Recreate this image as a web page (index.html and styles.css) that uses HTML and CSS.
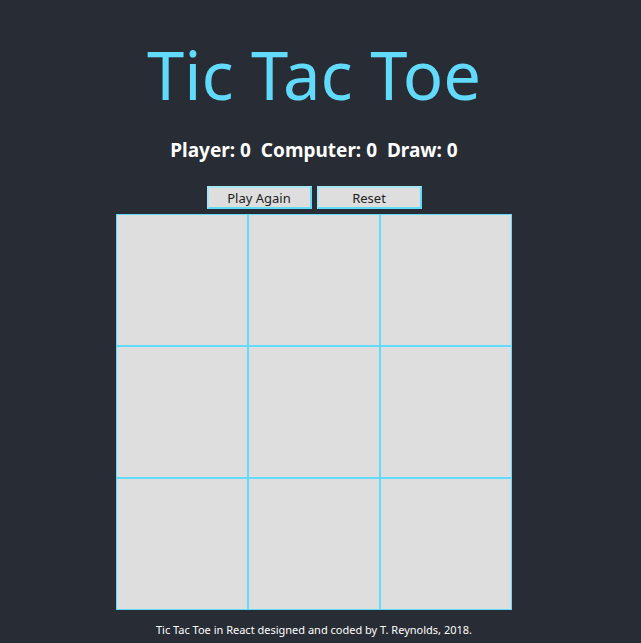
FILE: index.html
```html
<!DOCTYPE html>
<html lang="en">
<head>
  <meta charset="UTF-8" />
  <meta name="viewport" content="width=device-width, initial-scale=1.0"/>
  <title>Tic Tac Toe</title>
  <link rel="stylesheet" href="styles.css">
</head>
<body>
  <div class="app">
    <h1 class="title">Tic Tac Toe</h1>

    <div class="score">Player: 0&nbsp; Computer: 0&nbsp; Draw: 0</div>

    <div class="controls">
      <button class="btn">Play Again</button>
      <button class="btn">Reset</button>
    </div>

    <div class="board">
      <div class="cell"></div>
      <div class="cell"></div>
      <div class="cell"></div>
      <div class="cell"></div>
      <div class="cell"></div>
      <div class="cell"></div>
      <div class="cell"></div>
      <div class="cell"></div>
      <div class="cell"></div>
    </div>

    <footer class="credit">Tic Tac Toe in React designed and coded by T. Reynolds, 2018.</footer>
  </div>
</body>
</html>
```

FILE: styles.css
```css
body {
  background-color: #282c34;
  font-family: 'Noto Sans', 'Open Sans', sans-serif;
  margin: 0;
  padding: 0;
  color: #fff;
}

.app {
  width: 628px;
  text-align: center;
}

.title {
  margin: 0;
  padding-top: 34px;
  font-size: 67px;
  font-weight: normal;
  line-height: 80px;
  color: #61dafb;
}

.score {
  margin-top: 23px;
  font-size: 19px;
  font-weight: bold;
  line-height: 26px;
}

.controls {
  display: flex;
  justify-content: center;
  gap: 5px;
  margin-top: 23px;
}

.btn {
  width: 105px;
  height: 23px;
  padding: 0;
  background-color: #dedede;
  border: 2px solid #61dafb;
  border-top-color: #a8e6f5;
  border-left-color: #a8e6f5;
  font-family: inherit;
  font-size: 13px;
  color: #222;
}

.board {
  display: grid;
  grid-template-columns: repeat(3, 132px);
  width: 396px;
  margin: 5px auto 0;
}

.cell {
  height: 130px;
  background-color: #dedede;
  border: 1px solid #61dafb;
}

.credit {
  margin-top: 12px;
  font-size: 11px;
  line-height: 15px;
}
```
